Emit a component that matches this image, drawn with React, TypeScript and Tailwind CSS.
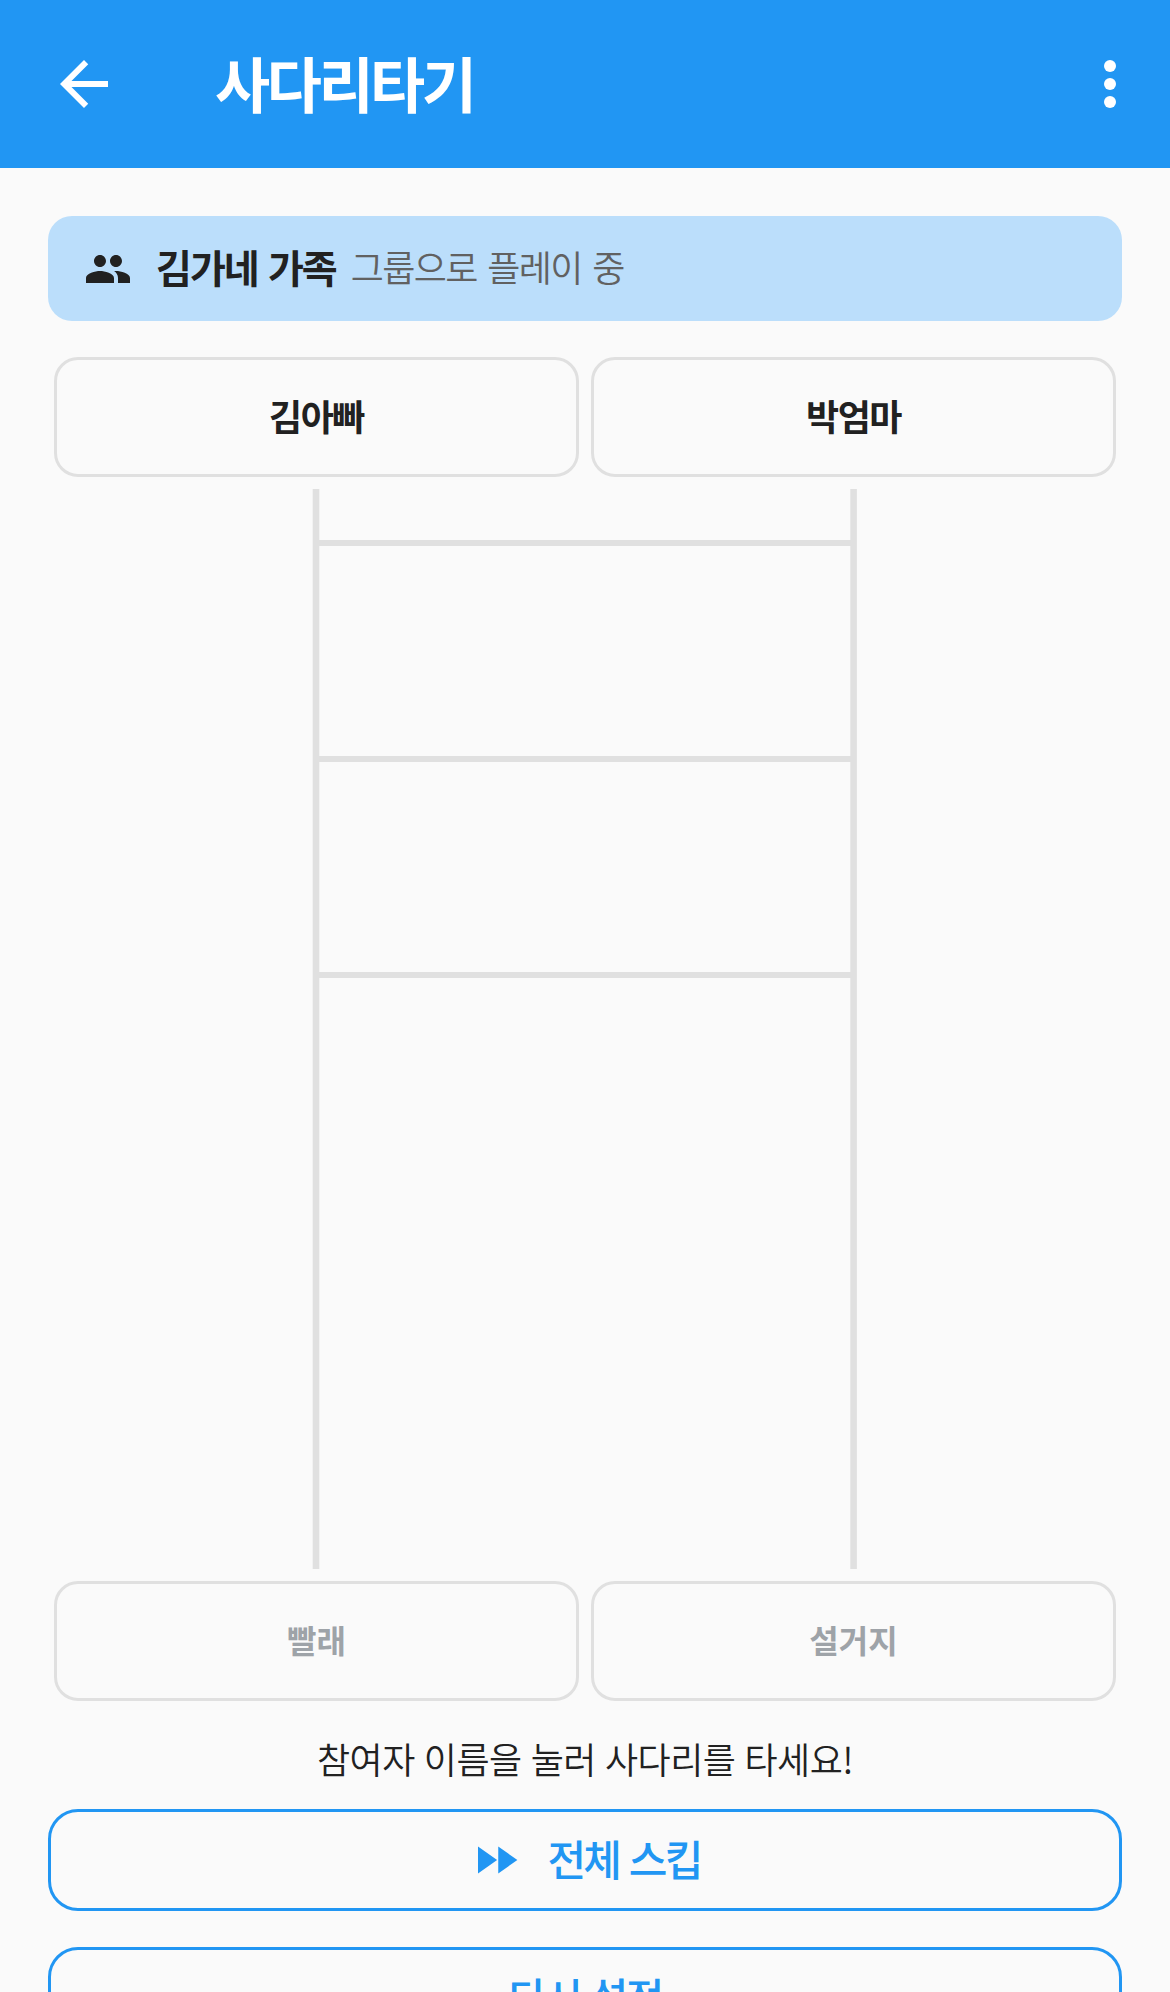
import type { ReactNode } from "react";

const font = { fontFamily: '"Noto Sans CJK KR", sans-serif' };

function NameBox({ label, muted }: { label: string; muted?: boolean }) {
  return (
    <div className="flex-1 px-[6px]">
      <div
        className={`h-[120px] pb-[5px] rounded-[24px] border-[3px] border-[#e0e0e0] flex items-center justify-center font-bold ${
          muted ? "text-[32px] text-[#9ea3a8]" : "text-[36px] tracking-[-1.5px] text-[#212121]"
        }`}
      >
        {label}
      </div>
    </div>
  );
}

function OutlineButton({ children }: { children: ReactNode }) {
  return (
    <div className="h-[102px] shrink-0 pb-[6px] rounded-[30px] border-[3px] border-[#2196f3] flex items-center justify-center text-[42px] font-medium tracking-[-2.8px] [word-spacing:3px] text-[#2196f3]">
      {children}
    </div>
  );
}

export default function App() {
  return (
    <div className="w-[1170px] h-[1992px] overflow-hidden bg-[#fafafa] flex flex-col" style={font}>
      {/* App bar */}
      <div className="h-[168px] bg-[#2196f3] flex items-center text-white shrink-0">
        <svg className="ml-[48px]" width="72" height="72" viewBox="0 0 24 24" fill="#ffffff">
          <path d="M20 11H7.83l5.59-5.59L12 4l-8 8 8 8 1.41-1.41L7.83 13H20v-2z" />
        </svg>
        <h1 className="ml-[95px] pb-[5px] text-[60px] font-bold leading-none tracking-[-3.5px]">사다리타기</h1>
        <div className="ml-auto mr-[42px] w-[36px] flex flex-col items-center gap-[6px]">
          <div className="w-[12px] h-[12px] rounded-full bg-white" />
          <div className="w-[12px] h-[12px] rounded-full bg-white" />
          <div className="w-[12px] h-[12px] rounded-full bg-white" />
        </div>
      </div>

      <div className="px-[48px] pt-[48px] flex flex-col">
        {/* Group banner */}
        <div className="h-[105px] rounded-[24px] bg-[#bbdefb] flex items-center pl-[36px]">
          <svg width="48" height="48" viewBox="0 0 24 24" fill="#212121">
            <path d="M16 11c1.66 0 2.99-1.34 2.99-3S17.66 5 16 5s-3 1.34-3 3 1.34 3 3 3zm-8 0c1.66 0 2.99-1.34 2.99-3S9.66 5 8 5 5 6.34 5 8s1.34 3 3 3zm0 2c-2.33 0-7 1.17-7 3.5V19h14v-2.5c0-2.33-4.67-3.5-7-3.5zm8 0c-.29 0-.62.02-.97.05 1.16.84 1.97 1.97 1.97 3.45V19h6v-2.5c0-2.33-4.67-3.5-7-3.5z" />
          </svg>
          <span className="ml-[24px] pb-[5px] text-[39px] font-bold text-[#212121] tracking-[-2px] [word-spacing:3.5px]">김가네 가족</span>
          <span className="ml-[15px] pb-[5px] text-[36px] font-[350] text-[#616161] tracking-[-1.6px] [word-spacing:4px]">그룹으로 플레이 중</span>
        </div>

        <div className="mt-[36px] flex">
          <NameBox label="김아빠" />
          <NameBox label="박엄마" />
        </div>

        {/* Ladder */}
        <svg className="mt-[12px] block" width="1074" height="1080" viewBox="0 0 1074 1080" fill="#e0e0e0">
          <rect x="264.7" y="0" width="6.6" height="1080" />
          <rect x="802.3" y="0" width="6.6" height="1080" />
          <rect x="271" y="51" width="532" height="6" />
          <rect x="271" y="267" width="532" height="6" />
          <rect x="271" y="483" width="532" height="6" />
        </svg>

        <div className="mt-[12px] flex">
          <NameBox label="빨래" muted />
          <NameBox label="설거지" muted />
        </div>

        <p className="mt-[33px] text-center text-[36px] font-[350] leading-[48px] tracking-[-0.5px] [word-spacing:1.5px] text-[#212121]">참여자 이름을 눌러 사다리를 타세요!</p>

        <div className="mt-[27px] flex flex-col gap-[36px]">
          <OutlineButton>
            <svg className="mr-[24px] mt-[6px]" width="54" height="54" viewBox="0 0 24 24" fill="#2196f3">
              <path d="M4 18l8.5-6L4 6v12zm9-12v12l8.5-6L13 6z" />
            </svg>
            <span>전체 스킵</span>
          </OutlineButton>
          <OutlineButton>다시 설정</OutlineButton>
        </div>
      </div>
    </div>
  );
}
